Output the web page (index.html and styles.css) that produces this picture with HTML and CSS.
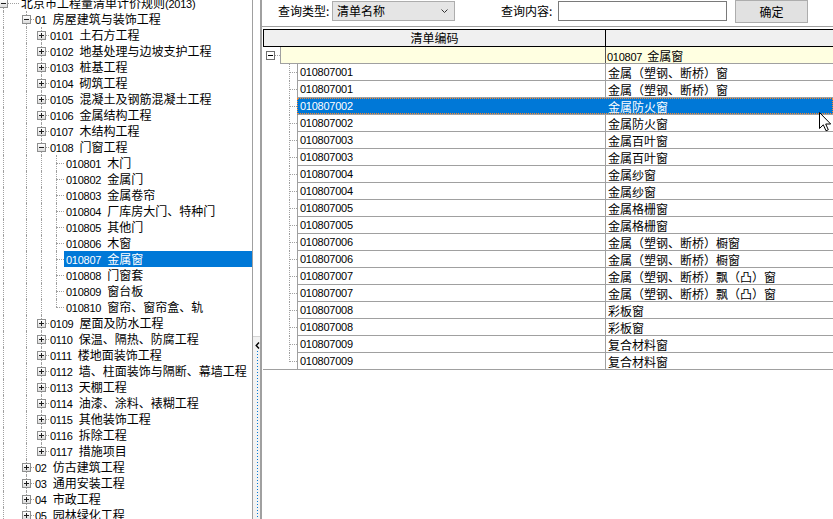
FILE: index.html
```html
<!DOCTYPE html>
<html lang="zh-CN">
<head>
<meta charset="utf-8">
<title>清单查询</title>
<link rel="stylesheet" href="styles.css">
</head>
<body>
<div class="tree-panel">
  <div class="tree">
    <div class="node"><span class="cell c0 t"><i class="box minus rootbox"></i></span><span class="label lr"><span class="nm">北京市工程量清单计价规则</span><span class="cd">(2013)</span></span></div>
    <div class="node"><span class="cell c0 v"></span><span class="cell t"><i class="box minus"></i></span><span class="label"><span class="cd">01</span><span class="nm">房屋建筑与装饰工程</span></span></div>
    <div class="node"><span class="cell c0 v"></span><span class="cell v"></span><span class="cell t"><i class="box plus"></i></span><span class="label"><span class="cd">0101</span><span class="nm">土石方工程</span></span></div>
    <div class="node"><span class="cell c0 v"></span><span class="cell v"></span><span class="cell t"><i class="box plus"></i></span><span class="label"><span class="cd">0102</span><span class="nm">地基处理与边坡支护工程</span></span></div>
    <div class="node"><span class="cell c0 v"></span><span class="cell v"></span><span class="cell t"><i class="box plus"></i></span><span class="label"><span class="cd">0103</span><span class="nm">桩基工程</span></span></div>
    <div class="node"><span class="cell c0 v"></span><span class="cell v"></span><span class="cell t"><i class="box plus"></i></span><span class="label"><span class="cd">0104</span><span class="nm">砌筑工程</span></span></div>
    <div class="node"><span class="cell c0 v"></span><span class="cell v"></span><span class="cell t"><i class="box plus"></i></span><span class="label"><span class="cd">0105</span><span class="nm">混凝土及钢筋混凝土工程</span></span></div>
    <div class="node"><span class="cell c0 v"></span><span class="cell v"></span><span class="cell t"><i class="box plus"></i></span><span class="label"><span class="cd">0106</span><span class="nm">金属结构工程</span></span></div>
    <div class="node"><span class="cell c0 v"></span><span class="cell v"></span><span class="cell t"><i class="box plus"></i></span><span class="label"><span class="cd">0107</span><span class="nm">木结构工程</span></span></div>
    <div class="node"><span class="cell c0 v"></span><span class="cell v"></span><span class="cell t"><i class="box minus"></i></span><span class="label"><span class="cd">0108</span><span class="nm">门窗工程</span></span></div>
    <div class="node"><span class="cell c0 v"></span><span class="cell v"></span><span class="cell v"></span><span class="cell t"></span><span class="label leaf"><span class="cd">010801</span><span class="nm">木门</span></span></div>
    <div class="node"><span class="cell c0 v"></span><span class="cell v"></span><span class="cell v"></span><span class="cell t"></span><span class="label leaf"><span class="cd">010802</span><span class="nm">金属门</span></span></div>
    <div class="node"><span class="cell c0 v"></span><span class="cell v"></span><span class="cell v"></span><span class="cell t"></span><span class="label leaf"><span class="cd">010803</span><span class="nm">金属卷帘</span></span></div>
    <div class="node"><span class="cell c0 v"></span><span class="cell v"></span><span class="cell v"></span><span class="cell t"></span><span class="label leaf"><span class="cd">010804</span><span class="nm">厂库房大门、特种门</span></span></div>
    <div class="node"><span class="cell c0 v"></span><span class="cell v"></span><span class="cell v"></span><span class="cell t"></span><span class="label leaf"><span class="cd">010805</span><span class="nm">其他门</span></span></div>
    <div class="node"><span class="cell c0 v"></span><span class="cell v"></span><span class="cell v"></span><span class="cell t"></span><span class="label leaf"><span class="cd">010806</span><span class="nm">木窗</span></span></div>
    <div class="node sel"><span class="cell c0 v"></span><span class="cell v"></span><span class="cell v"></span><span class="cell t"></span><span class="label leaf"><span class="cd">010807</span><span class="nm">金属窗</span></span></div>
    <div class="node"><span class="cell c0 v"></span><span class="cell v"></span><span class="cell v"></span><span class="cell t"></span><span class="label leaf"><span class="cd">010808</span><span class="nm">门窗套</span></span></div>
    <div class="node"><span class="cell c0 v"></span><span class="cell v"></span><span class="cell v"></span><span class="cell t"></span><span class="label leaf"><span class="cd">010809</span><span class="nm">窗台板</span></span></div>
    <div class="node"><span class="cell c0 v"></span><span class="cell v"></span><span class="cell v"></span><span class="cell l"></span><span class="label leaf"><span class="cd">010810</span><span class="nm">窗帘、窗帘盒、轨</span></span></div>
    <div class="node"><span class="cell c0 v"></span><span class="cell v"></span><span class="cell t"><i class="box plus"></i></span><span class="label"><span class="cd">0109</span><span class="nm">屋面及防水工程</span></span></div>
    <div class="node"><span class="cell c0 v"></span><span class="cell v"></span><span class="cell t"><i class="box plus"></i></span><span class="label"><span class="cd">0110</span><span class="nm">保温、隔热、防腐工程</span></span></div>
    <div class="node"><span class="cell c0 v"></span><span class="cell v"></span><span class="cell t"><i class="box plus"></i></span><span class="label"><span class="cd">0111</span><span class="nm">楼地面装饰工程</span></span></div>
    <div class="node"><span class="cell c0 v"></span><span class="cell v"></span><span class="cell t"><i class="box plus"></i></span><span class="label"><span class="cd">0112</span><span class="nm">墙、柱面装饰与隔断、幕墙工程</span></span></div>
    <div class="node"><span class="cell c0 v"></span><span class="cell v"></span><span class="cell t"><i class="box plus"></i></span><span class="label"><span class="cd">0113</span><span class="nm">天棚工程</span></span></div>
    <div class="node"><span class="cell c0 v"></span><span class="cell v"></span><span class="cell t"><i class="box plus"></i></span><span class="label"><span class="cd">0114</span><span class="nm">油漆、涂料、裱糊工程</span></span></div>
    <div class="node"><span class="cell c0 v"></span><span class="cell v"></span><span class="cell t"><i class="box plus"></i></span><span class="label"><span class="cd">0115</span><span class="nm">其他装饰工程</span></span></div>
    <div class="node"><span class="cell c0 v"></span><span class="cell v"></span><span class="cell t"><i class="box plus"></i></span><span class="label"><span class="cd">0116</span><span class="nm">拆除工程</span></span></div>
    <div class="node"><span class="cell c0 v"></span><span class="cell v"></span><span class="cell l"><i class="box plus"></i></span><span class="label"><span class="cd">0117</span><span class="nm">措施项目</span></span></div>
    <div class="node"><span class="cell c0 v"></span><span class="cell t"><i class="box plus"></i></span><span class="label"><span class="cd">02</span><span class="nm">仿古建筑工程</span></span></div>
    <div class="node"><span class="cell c0 v"></span><span class="cell t"><i class="box plus"></i></span><span class="label"><span class="cd">03</span><span class="nm">通用安装工程</span></span></div>
    <div class="node"><span class="cell c0 v"></span><span class="cell t"><i class="box plus"></i></span><span class="label"><span class="cd">04</span><span class="nm">市政工程</span></span></div>
    <div class="node"><span class="cell c0 v"></span><span class="cell t"><i class="box plus"></i></span><span class="label"><span class="cd">05</span><span class="nm">园林绿化工程</span></span></div>
  </div>
</div>

<div class="splitter">
  <div class="sp-top"></div>
  <div class="sp-handle">
    <svg class="sp-arrow" width="5" height="7" viewBox="0 0 5 7"><polyline points="4,0.5 1.2,3.5 4,6.5" fill="none" stroke="#000" stroke-width="1.4"/></svg>
    <div class="sp-dots"></div>
  </div>
</div>

<div class="right">
  <div class="toolbar">
    <span class="lbl lbl1">查询类型:</span>
    <div class="combo"><span class="combo-text">清单名称</span><svg class="chev" width="7" height="4" viewBox="0 0 7 4"><polyline points="0.5,0.5 3.5,3.5 6.5,0.5" fill="none" stroke="#333" stroke-width="1"/></svg></div>
    <span class="lbl lbl2">查询内容:</span>
    <div class="input"></div>
    <div class="btn">确定</div>
  </div>
  <div class="gridwrap">
    <div class="grid">
      <div class="ghead"><div class="h1">清单编码</div><div class="h2"></div></div>
      <div class="grow group"><div class="gind gi-group"><i class="gbox"></i></div><div class="gcells"><div class="c1"></div><div class="c2"><span class="cd">010807</span><span class="nm">金属窗</span></div></div></div>
      <div class="grow"><div class="gind t"></div><div class="gcells"><div class="c1 cd">010807001</div><div class="c2 nm">金属（塑钢、断桥）窗</div></div></div>
      <div class="grow"><div class="gind t"></div><div class="gcells"><div class="c1 cd">010807001</div><div class="c2 nm">金属（塑钢、断桥）窗</div></div></div>
      <div class="grow sel"><div class="gind t"></div><div class="gcells"><div class="c1 cd">010807002</div><div class="c2 nm">金属防火窗</div></div></div>
      <div class="grow"><div class="gind t"></div><div class="gcells"><div class="c1 cd">010807002</div><div class="c2 nm">金属防火窗</div></div></div>
      <div class="grow"><div class="gind t"></div><div class="gcells"><div class="c1 cd">010807003</div><div class="c2 nm">金属百叶窗</div></div></div>
      <div class="grow"><div class="gind t"></div><div class="gcells"><div class="c1 cd">010807003</div><div class="c2 nm">金属百叶窗</div></div></div>
      <div class="grow"><div class="gind t"></div><div class="gcells"><div class="c1 cd">010807004</div><div class="c2 nm">金属纱窗</div></div></div>
      <div class="grow"><div class="gind t"></div><div class="gcells"><div class="c1 cd">010807004</div><div class="c2 nm">金属纱窗</div></div></div>
      <div class="grow"><div class="gind t"></div><div class="gcells"><div class="c1 cd">010807005</div><div class="c2 nm">金属格栅窗</div></div></div>
      <div class="grow"><div class="gind t"></div><div class="gcells"><div class="c1 cd">010807005</div><div class="c2 nm">金属格栅窗</div></div></div>
      <div class="grow"><div class="gind t"></div><div class="gcells"><div class="c1 cd">010807006</div><div class="c2 nm">金属（塑钢、断桥）橱窗</div></div></div>
      <div class="grow"><div class="gind t"></div><div class="gcells"><div class="c1 cd">010807006</div><div class="c2 nm">金属（塑钢、断桥）橱窗</div></div></div>
      <div class="grow"><div class="gind t"></div><div class="gcells"><div class="c1 cd">010807007</div><div class="c2 nm">金属（塑钢、断桥）飘（凸）窗</div></div></div>
      <div class="grow"><div class="gind t"></div><div class="gcells"><div class="c1 cd">010807007</div><div class="c2 nm">金属（塑钢、断桥）飘（凸）窗</div></div></div>
      <div class="grow"><div class="gind t"></div><div class="gcells"><div class="c1 cd">010807008</div><div class="c2 nm">彩板窗</div></div></div>
      <div class="grow"><div class="gind t"></div><div class="gcells"><div class="c1 cd">010807008</div><div class="c2 nm">彩板窗</div></div></div>
      <div class="grow"><div class="gind t"></div><div class="gcells"><div class="c1 cd">010807009</div><div class="c2 nm">复合材料窗</div></div></div>
      <div class="grow last"><div class="gind l"></div><div class="gcells"><div class="c1 cd">010807009</div><div class="c2 nm">复合材料窗</div></div></div>
    </div>
  </div>
</div>

<svg class="cursor" width="13" height="20" viewBox="0 0 13 20"><path d="M0.5,0.5 L0.5,16.5 L4.3,12.8 L7,18.8 L9.3,17.8 L6.7,12 L11.7,12 Z" fill="#fff" stroke="#000" stroke-width="1" stroke-linejoin="miter"/></svg>
</body>
</html>
```

FILE: styles.css
```css
* { box-sizing: border-box; }
html, body { margin: 0; padding: 0; }
body {
  width: 833px;
  height: 519px;
  overflow: hidden;
  display: flex;
  background: #fff;
  color: #000;
  font-family: "Noto Sans CJK SC", sans-serif;
  font-size: 12px;
  position: relative;
}
.cd {
  font-family: "Liberation Sans", "Noto Sans CJK SC", sans-serif;
  font-size: 11px;
  letter-spacing: -0.25px;
}
.nm {
  font-family: "Noto Sans CJK SC", sans-serif;
  font-size: 12px;
}
span.cd + span.nm { margin-left: 5px; }
.label span.cd + span.nm { margin-left: 6px; }

/* ---------- left tree ---------- */
.tree-panel {
  flex: none;
  width: 253px;
  height: 519px;
  border-right: 1px solid #a0a0a0;
  overflow: hidden;
}
.tree { margin-top: -5px; }
.node {
  display: flex;
  height: 16px;
  line-height: 16px;
  white-space: nowrap;
}
.cell {
  position: relative;
  flex: none;
  width: 15px;
  height: 16px;
}
.cell.c0 { width: 19px; }
.cell.v::before,
.cell.t::before,
.cell.l::before {
  content: "";
  position: absolute;
  left: 7px;
  top: 0;
  bottom: 0;
  border-left: 1px dotted #a0a0a0;
}
.cell.l::before { bottom: 8px; }
.cell.t::after,
.cell.l::after {
  content: "";
  position: absolute;
  left: 7px;
  right: 0;
  top: 8px;
  border-top: 1px dotted #a0a0a0;
}
.cell.c0::before, .cell.c0::after { left: 3px; }

.box {
  position: absolute;
  left: 3px;
  top: 4px;
  width: 9px;
  height: 9px;
  border: 1px solid #8e8f8f;
  background: linear-gradient(#ffffff, #dcdcdc);
  z-index: 1;
}
.box.rootbox { left: -1px; }
.box::before {
  content: "";
  position: absolute;
  left: 1px;
  top: 3px;
  width: 5px;
  height: 1px;
  background: #1e1e1e;
}
.box.plus::after {
  content: "";
  position: absolute;
  left: 3px;
  top: 1px;
  width: 1px;
  height: 5px;
  background: #1e1e1e;
}
.label {
  flex: 1;
  padding-left: 1px;
  height: 16px;
}
.label.lr { padding-left: 2px; }
.label.leaf { padding-left: 2px; }
.node.sel .label {
  background: #0078d7;
  color: #fff;
}

/* ---------- splitter ---------- */
.splitter {
  flex: none;
  width: 7px;
  display: flex;
  flex-direction: column;
}
.sp-top { height: 336px; background: #fff; }
.sp-handle {
  flex: 1;
  background: #f2f2f2;
  border-top: 1px solid #d4d4d4;
  display: flex;
  flex-direction: column;
}
.sp-arrow { display: block; margin: 5px 0 0 2px; }
.sp-dots {
  margin: 2px 0 0 4px;
  width: 1px;
  flex: 1;
  background: repeating-linear-gradient(to bottom, #0078d7 0 1px, transparent 1px 3px);
}

/* ---------- right panel ---------- */
.right {
  flex: 1;
  min-width: 0;
  border-left: 2px solid #a0a0a0;
  display: flex;
  flex-direction: column;
}
.toolbar {
  flex: none;
  height: 26px;
  display: flex;
  align-items: flex-start;
}
.lbl {
  line-height: 16px;
  margin-top: 3px;
  white-space: nowrap;
}
.lbl1 { margin-left: 16px; width: 54px; }
.lbl2 { margin-left: 46px; width: 57px; }
.combo {
  width: 123px;
  height: 20px;
  margin-top: 1px;
  border: 1px solid #adadad;
  background: #e5e5e5;
  display: flex;
  align-items: center;
  padding-left: 4px;
}
.combo-text { flex: 1; line-height: 16px; }
.chev { display: block; margin-right: 6px; }
.input {
  width: 169px;
  height: 20px;
  margin-top: 1px;
  border: 1px solid #7a7a7a;
  background: #fff;
}
.btn {
  width: 73px;
  height: 23px;
  margin-left: 8px;
  border: 1px solid #adadad;
  background: #e1e1e1;
  text-align: center;
  line-height: 21px;
}

/* ---------- grid ---------- */
.gridwrap {
  flex: 1;
  border-top: 1px solid #a0a0a0;
  padding-top: 2px;
}
.grid { margin-left: 1px; }
.ghead {
  display: flex;
  height: 18px;
  border-top: 1px solid #000;
  border-bottom: 1px solid #000;
  background: #f0f0f0;
  line-height: 16px;
}
.h1 {
  width: 343px;
  border-left: 1px solid #000;
  border-right: 1px solid #000;
  text-align: center;
}
.h2 { flex: 1; }

.grow {
  display: flex;
  height: 17px;
  white-space: nowrap;
}
.gind {
  position: relative;
  flex: none;
  width: 34px;
  height: 17px;
}
.gind.t::before,
.gind.l::before {
  content: "";
  position: absolute;
  left: 26px;
  top: 0;
  bottom: 0;
  border-left: 1px dotted #a0a0a0;
}
.gind.l::before { bottom: 9px; }
.gind.t::after,
.gind.l::after {
  content: "";
  position: absolute;
  left: 26px;
  right: 0;
  top: 8px;
  border-top: 1px dotted #a0a0a0;
}
.gind.gi-group { width: 17px; }
.gind.gi-group::after {
  content: "";
  position: absolute;
  left: 7px;
  right: 0;
  top: 8px;
  border-top: 1px dotted #a0a0a0;
}
.gbox {
  position: absolute;
  left: 3px;
  top: 4px;
  width: 9px;
  height: 9px;
  border: 1px solid #6f6f6f;
  background: #fff;
  z-index: 1;
}
.gbox::before {
  content: "";
  position: absolute;
  left: 1px;
  top: 3px;
  width: 5px;
  height: 1px;
  background: #000;
}
.gcells {
  position: relative;
  flex: 1;
  display: flex;
  border-left: 1px solid #a0a0a0;
  border-bottom: 1px solid #a0a0a0;
}
.c1 {
  flex: none;
  width: 308px;
  height: 16px;
  line-height: 17px;
  padding-left: 2px;
  border-right: 1px solid #a0a0a0;
}
.c2 {
  flex: 1;
  height: 16px;
  line-height: 17px;
  padding-left: 2px;
}
.group .gcells { background: #ffffe1; }
.group .c1 { width: 325px; border-right-color: #555; }
.group .c2 { padding-left: 1px; }

.grow.sel .gcells {
  background: #0078d7;
  border-left-color: #0078d7;
  color: #fff;
}
.grow.sel .c1 { border-right-color: #0078d7; }
.grow.sel .gcells::after {
  content: "";
  position: absolute;
  left: -1px;
  top: 0;
  right: 0;
  bottom: 0;
  border: 1px dotted #ff8728;
}
.grow.last .gind { border-bottom: 1px solid #a0a0a0; }

.cursor {
  position: absolute;
  left: 819px;
  top: 112px;
}
```
